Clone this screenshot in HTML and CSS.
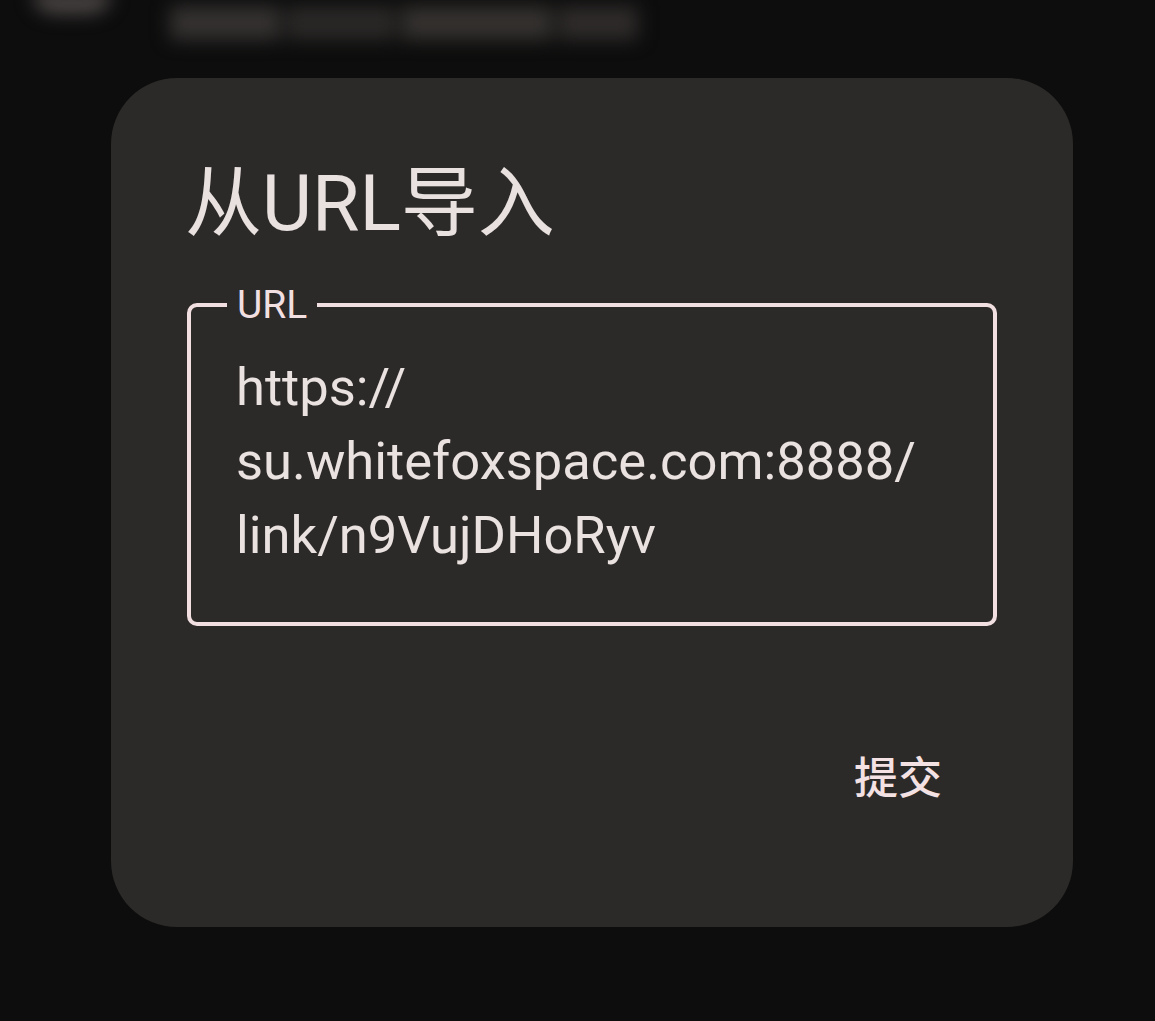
FILE: index.html
```html
<!DOCTYPE html>
<html lang="zh-CN">
<head>
<meta charset="utf-8">
<title>从URL导入</title>
<link rel="stylesheet" href="styles.css">
</head>
<body>
<div class="backdrop">
  <div class="blob"></div>
  <div class="blur-text">
    <span class="bt bt1"></span><span class="bt bt2"></span><span class="bt bt3"></span><span class="bt bt4"></span>
  </div>
</div>
<div class="dialog">
  <h1 class="title">从URL导入</h1>
  <fieldset class="field">
    <legend class="label">URL</legend>
    <div class="value">https://<br>su.whitefoxspace.com:8888/<br>link/n9VujDHoRyv</div>
  </fieldset>
  <div class="actions">
    <span class="btn">提交</span>
  </div>
</div>
</body>
</html>
```

FILE: styles.css
```css
html, body {
  margin: 0;
  padding: 0;
  background: #0d0d0d;
  width: 1155px;
  height: 1021px;
  overflow: hidden;
  font-family: Roboto, "Noto Sans CJK SC", sans-serif;
}
.backdrop {
  height: 78px;
  display: flex;
  align-items: flex-start;
  filter: blur(9px);
  overflow: visible;
}
.blob {
  width: 80px;
  height: 22px;
  margin: -8px 0 0 32px;
  background: #4a4544;
  border-radius: 0 0 40px 40px;
}
.blur-text {
  display: flex;
  gap: 6px;
  margin: 6px 0 0 58px;
}
.bt {
  height: 34px;
  background: #2e2b2a;
  display: block;
}
.bt1 { width: 110px; background: #343130; }
.bt2 { width: 110px; background: #2a2827; }
.bt3 { width: 150px; background: #34312f; }
.bt4 { width: 80px; }
.dialog {
  margin-left: 111px;
  width: 962px;
  height: 849px;
  box-sizing: border-box;
  background: #2c2a28;
  border-radius: 66px;
  padding: 76px 76px 0 76px;
  display: flex;
  flex-direction: column;
}
.title {
  margin: 0 0 0 -2px;
  font-weight: 400;
  font-size: 77px;
  line-height: 100px;
  color: #e8e1e0;
}
.field {
  margin: 36px 0 0 0;
  padding: 0 45px 46px 45px;
  border: 4.5px solid #f2dfe1;
  border-radius: 10px;
  height: 336px;
  box-sizing: border-box;
}
.label {
  padding: 0 10px;
  margin-left: -9px;
  font-size: 39px;
  line-height: 30px;
  color: #f2dfe1;
}
.value {
  margin-top: 30px;
  font-size: 52.5px;
  line-height: 74px;
  color: #e9e2e1;
}
.actions {
  display: flex;
  justify-content: flex-end;
  margin-top: 119px;
  padding-right: 55px;
}
.btn {
  font-size: 44px;
  line-height: 60px;
  font-weight: 500;
  color: #f4e1e3;
  font-family: "Noto Sans CJK SC", sans-serif;
}
```
